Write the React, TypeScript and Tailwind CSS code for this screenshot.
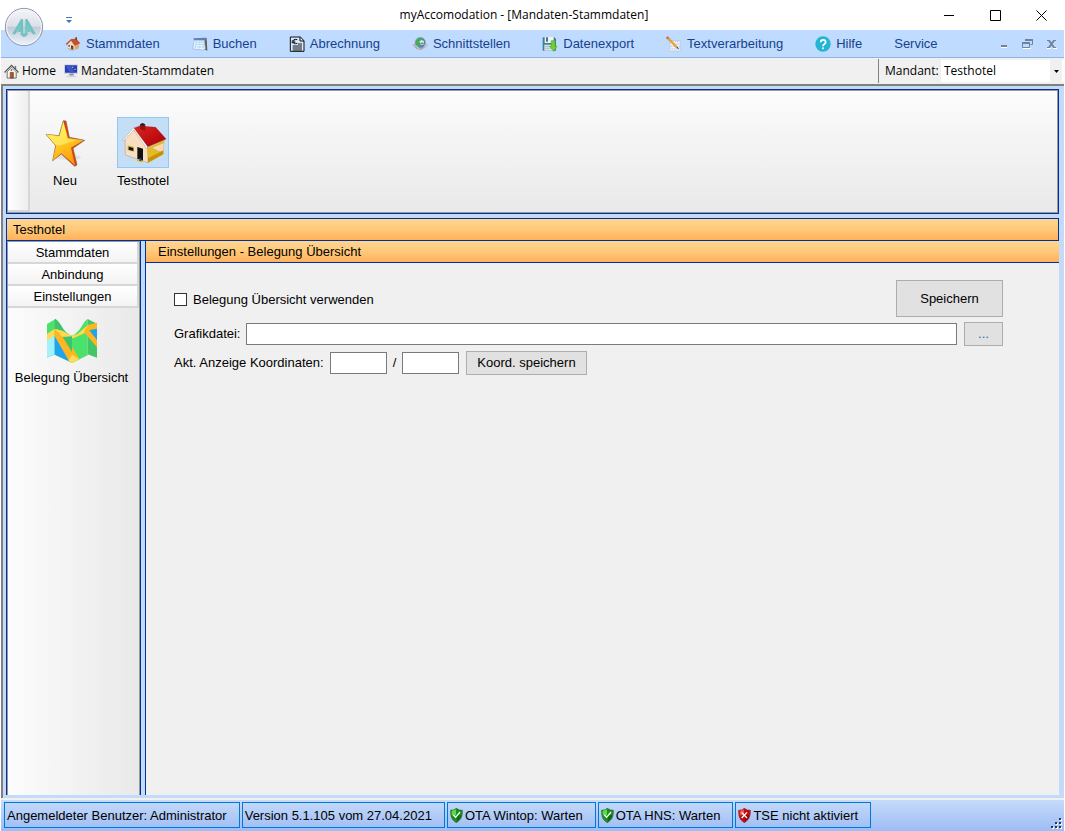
import React, { useState } from "react"

const sans = "font-['Liberation_Sans',Arial,sans-serif]"
const ui = "font-['Open_Sans','Noto_Sans',sans-serif]"

function LogoIcon() {
  return (
    <svg width="40" height="40" viewBox="0 0 120 120" aria-hidden="true">
      <defs>
        <linearGradient id="orb" x1="0" y1="0" x2="0" y2="1">
          <stop offset="0" stopColor="#f6f7fa" />
          <stop offset="0.48" stopColor="#dcdfe8" />
          <stop offset="0.5" stopColor="#c3c9d8" />
          <stop offset="1" stopColor="#eef2fa" />
        </linearGradient>
      </defs>
      <circle cx="60" cy="60" r="56" fill="url(#orb)" stroke="#8d99ad" strokeWidth="3" />
      <circle cx="60" cy="60" r="52" fill="none" stroke="#f4f6fb" strokeWidth="3" />
      <path d="M24 82 51 36H57V80H51V55L34 82Z" fill="#6fc4c2" />
      <path d="M96 82 70 36H64V80H70V55L78 69 86 82Z" fill="#6fc4c2" />
      <path d="M40 76 51 53V74ZM80 76 70 53V74Z" fill="#6fc4c2" />
      <path d="M48 79H73L68 86 60 91 53 86Z" fill="#6fc4c2" />
      <path d="M60 40v40" stroke="#8dcdd0" strokeWidth="2" />
    </svg>
  )
}

function SmallHouseIcon() {
  return (
    <svg width="16" height="16" viewBox="0 0 48 48" aria-hidden="true">
      <path d="M7 25 19 13 29 27v16L9 37Z" fill="#f2dcc2" />
      <path d="M29 27l13-5v15l-13 6Z" fill="#dcaa70" />
      <path d="M18 9 34 8l12 14-17 7L18 14 6 27l-4-3Z" fill="#c4512f" />
      <path d="M31 4h5v8h-5Z" fill="#8f3520" />
      <path d="M18 28l7 2v13l-7-2Z" fill="#6d3d25" />
      <path d="M10 27h5v5h-5Z" fill="#4b6a89" />
      <path d="M6 37l11 6h11l-8-5Z" fill="#a9a48b" />
    </svg>
  )
}

function CalendarIcon() {
  return (
    <svg width="16" height="16" viewBox="0 0 48 48" aria-hidden="true">
      <path d="M32 6h12l2 38-10-4Z" fill="#5d6052" />
      <path d="M4 7 42 5v9L6 13Z" fill="#5b7fae" />
      <path d="M6 13h31l3 26-8 3-30-3Z" fill="#e7f4ff" stroke="#91b5d6" strokeWidth="2" />
      <path d="M10 19h25M8 26h29M7 33h30M15 14l-5 24M24 14l-2 25M32 14l1 24" stroke="#acd3ef" strokeWidth="3" strokeDasharray="5 3" fill="none" />
    </svg>
  )
}

function InvoiceIcon() {
  return (
    <svg width="16" height="16" viewBox="0 0 48 48" aria-hidden="true">
      <path d="M4 3h30l11 11v32H4Z" fill="#d9eaff" stroke="#111" strokeWidth="3" />
      <path d="M33 3v12h12" fill="none" stroke="#111" strokeWidth="3" />
      <path d="M25 11c-10-3-13 1-13 6s5 8 13 5M8 15h11M8 20h11" fill="none" stroke="#111" strokeWidth="3" />
      <path d="M27 24h12M11 30h28M11 36h28M11 42h28" stroke="#111" strokeWidth="3" />
    </svg>
  )
}

function GlobeIcon() {
  return (
    <svg width="16" height="16" viewBox="0 0 48 48" aria-hidden="true">
      <path d="M1 28l12-7 34 5-11 11-11 6-12-4Z" fill="#a6abb5" />
      <circle cx="25" cy="20" r="16" fill="#5387ad" stroke="#9aa9ae" strokeWidth="2" />
      <path d="M12 20c-1-12 13-18 22-12l-6 8-8 2 3 15c-6-1-9-6-11-13Z" fill="#3fb052" />
      <path d="M22 17l6-5 8 3v10l-9 2Z" fill="#e1e8df" />
      <path d="M26 20h9v3h-9Z" fill="#356276" />
      <path d="M1 28l12 2 8 8-7 2M36 37l10-11-9 2" fill="none" stroke="#bfc2c9" strokeWidth="4" />
    </svg>
  )
}

function ExportIcon() {
  return (
    <svg width="16" height="16" viewBox="0 0 48 48" aria-hidden="true">
      <path d="M2 4h35l5 5v35H2Z" fill="#377fa7" />
      <path d="M8 3h27v18H8Z" fill="#eef3f3" />
      <path d="M12 4h6v13h-6Z" fill="#547180" />
      <path d="M7 26h26v18H7Z" fill="#d9e6e8" />
      <path d="M10 31h16M10 37h16" stroke="#8ba9b3" strokeWidth="2" />
      <path d="M28 14h11v17h6L35 46 23 31h5Z" fill="#73cf2f" stroke="#55ad25" strokeWidth="2" />
    </svg>
  )
}

function WritingIcon() {
  return (
    <svg width="16" height="16" viewBox="0 0 48 48" aria-hidden="true">
      <path d="M12 14h31l-2 22 6 9H6l6-9Z" fill="#edf5ff" stroke="#b1c3db" strokeWidth="2" />
      <path d="M14 31h13M12 39h30M27 17h12M31 24h8" stroke="#9fa9bb" strokeWidth="2" strokeDasharray="4 2" />
      <path d="M1 6 6 2l29 30-4 4Z" fill="#f2a728" stroke="#bb741c" />
      <path d="M0 5 5 1l5 5-5 4Z" fill="#ce6c54" />
      <path d="M31 36l4-4 4 8Z" fill="#4f4437" />
    </svg>
  )
}

function HelpIcon() {
  return (
    <svg width="16" height="16" viewBox="0 0 48 48" aria-hidden="true">
      <circle cx="24" cy="24" r="23" fill="#24b5d5" />
      <path d="M17 19c0-10 15-10 15 0 0 5-8 5-8 12" fill="none" stroke="#fff" strokeWidth="5" />
      <circle cx="24" cy="37" r="3" fill="#fff" />
    </svg>
  )
}

function HomeIcon() {
  return (
    <svg width="15" height="15" viewBox="0 0 48 48" aria-hidden="true">
      <path d="M34 6h5v13h-5Z" fill="#777" />
      <path d="M10 25 24 10l15 15v20H10Z" fill="#f8f6ef" stroke="#666" strokeWidth="3" />
      <path d="M2 27 24 5l22 22" fill="none" stroke="#555" strokeWidth="5" />
      <path d="M5 27 24 8l19 19" fill="none" stroke="#eee" strokeWidth="2" />
      <path d="M20 27h10v18H20Z" fill="#a95a25" stroke="#66381f" strokeWidth="2" />
      <circle cx="24" cy="19" r="3" fill="#777" />
    </svg>
  )
}

function MonitorIcon() {
  return (
    <svg width="14" height="14" viewBox="0 0 42 42" aria-hidden="true">
      <path d="M1 2h40v27H1Z" fill="#b9bed0" />
      <path d="M3 4h36v22H3Z" fill="#263fb4" />
      <path d="M3 4h17l13 22H19Z" fill="#3d56c8" />
      <path d="M24 8h4v3h-4ZM31 14h4v3h-4Z" fill="#b5c8ff" />
      <path d="M16 29h13v6H16Z" fill="#8b91a1" />
      <path d="M8 35h27l4 5H6Z" fill="#d3d5dc" />
    </svg>
  )
}

function StarIcon() {
  return (
    <svg width="48" height="48" viewBox="123 117 144 144" aria-hidden="true">
      <defs>
        <linearGradient id="star" x1="0" y1="0" x2="0.5" y2="1">
          <stop offset="0" stopColor="#ffff45" />
          <stop offset="0.45" stopColor="#ffd52b" />
          <stop offset="1" stopColor="#ff9d08" />
        </linearGradient>
      </defs>
      <ellipse cx="205" cy="232" rx="38" ry="8" fill="#e2e2e2" />
      <path d="M190 122 198 123 208 172 254 181 219 205 231 255 224 259 184 222 158 242 167 197 138 163 177 167Z" fill="#e23b0e" stroke="#6f6a58" strokeWidth="2" />
      <path d="M190 124 204 174 251 181 213 203 225 256 184 220 158 242 168 197 138 163 178 168Z" fill="url(#star)" />
      <path d="M190 128 202 176 229 183C207 180 185 202 167 195L143 166 179 170Z" fill="#fff37a" opacity="0.6" />
    </svg>
  )
}

function HotelIcon() {
  return (
    <svg width="48" height="48" viewBox="357 117 144 144" aria-hidden="true">
      <defs>
        <linearGradient id="roof" x1="0" y1="0" x2="1" y2="1">
          <stop offset="0" stopColor="#e12320" />
          <stop offset="1" stopColor="#a80007" />
        </linearGradient>
      </defs>
      <path d="M375 177 402 148 444 202 444 248 376 225Z" fill="#f8dfc2" stroke="#88765f" />
      <path d="M441 204 493 180 490 223 444 248Z" fill="#e0bb2c" />
      <path d="M458 203 491 190 489 217 472 211Z" fill="#f8d8bb" />
      <path d="M444 235 490 211 490 223 444 248Z" fill="#c99008" />
      <path d="M401 145 419 138 467 142 498 177 442 201Z" fill="url(#roof)" stroke="#930d0e" />
      <path d="M420 134l8-3 8 3v18l-16-4Z" fill="#8f1414" />
      <path d="M419 133l9-4 8 4-8 5Z" fill="#222" />
      <path d="M368 180 401 143 443 200 440 206 402 150 371 183Z" fill="#fff" stroke="#746d69" />
      <path d="M383 196 402 201V215L383 211Z" fill="#d2b13e" />
      <path d="M386 200 400 204V213L386 209Z" fill="#161616" />
      <path d="M412 201 429 206V243L412 237Z" fill="#111" />
      <path d="M412 236 429 242 425 248 410 242Z" fill="#e4bd21" />
      <path d="M418 235h6v8h-6Z" fill="#2448ad" />
    </svg>
  )
}

function MapIcon() {
  return (
    <svg width="50" height="45" viewBox="141 321 150 135" aria-hidden="true">
      <path d="M141 339 167 324V430L141 440Z" fill="#4be26b" />
      <path d="M167 324 C185 335 187 364 216 374V456L164 430V324Z" fill="#41c36b" />
      <path d="M216 374C244 362 247 333 263 324V433L216 456Z" fill="#4be26b" />
      <path d="M263 324 291 338V440L263 430Z" fill="#43c568" />
      <path d="M141 384 164 372V430L141 440Z" fill="#a3f0ff" />
      <path d="M164 370 210 452 164 431Z" fill="#20a4ef" />
      <path d="M141 369 164 353V374L141 387Z" fill="#ffda56" />
      <path d="M164 354 188 360 238 444 216 456 207 450 164 375Z" fill="#ffb61f" />
      <path d="M216 431 237 444 216 456 205 449Z" fill="#ffdb56" />
      <path d="M164 354C188 356 203 370 216 374L233 369 263 342V362L220 382 187 377Z" fill="#ffda50" />
      <path d="M263 342 291 335V353L268 358 291 386V409L252 363Z" fill="#ffb61f" />
      <path d="M268 358 291 353V386Z" fill="#20a4ef" />
      <path d="M188 378 216 376V424Z" fill="#41c36b" />
    </svg>
  )
}

function ShieldIcon({ ok }: { ok: boolean }) {
  return (
    <svg width="13" height="15" viewBox="0 0 39 45" aria-hidden="true">
      <path d="M2 7 11 6 19 1 28 6 37 7C37 24 35 34 19 44 3 34 2 24 2 7Z" fill={ok ? "#16951b" : "#c60c12"} stroke={ok ? "#2d5330" : "#7e2525"} strokeWidth="2" />
      <path d="M5 9 18 4V22H5Z" fill={ok ? "#57dc4f" : "#f3524d"} />
      <path d="M20 22h14c-2 10-6 14-14 19Z" fill={ok ? "#086e11" : "#990006"} />
      {ok
        ? <path d="M10 21 17 28 30 12" fill="none" stroke="#fff" strokeWidth="4" />
        : <path d="M11 13 27 30M27 13 11 30" fill="none" stroke="#fff" strokeWidth="4" />}
    </svg>
  )
}

const menuItems = [
  { label: "Stammdaten", icon: <SmallHouseIcon /> },
  { label: "Buchen", icon: <CalendarIcon /> },
  { label: "Abrechnung", icon: <InvoiceIcon /> },
  { label: "Schnittstellen", icon: <GlobeIcon /> },
  { label: "Datenexport", icon: <ExportIcon /> },
  { label: "Textverarbeitung", icon: <WritingIcon /> },
  { label: "Hilfe", icon: <HelpIcon /> },
  { label: "Service", icon: null },
]

const statusItems = [
  { label: "Angemeldeter Benutzer: Administrator", icon: null },
  { label: "Version 5.1.105 vom 27.04.2021", icon: null },
  { label: "OTA Wintop: Warten", icon: <ShieldIcon ok={true} /> },
  { label: "OTA HNS: Warten", icon: <ShieldIcon ok={true} /> },
  { label: "TSE nicht aktiviert", icon: <ShieldIcon ok={false} /> },
]

function TitleBar() {
  return (
    <header className={`relative flex h-[30px] items-center bg-white ${ui}`}>
      <div className="absolute left-[3px] top-[7px] z-10"><LogoIcon /></div>
      <button aria-label="Symbolleiste anpassen" className="ml-[62px] flex h-5 w-3 items-end justify-center pb-px">
        <svg width="6" height="7" viewBox="0 0 6 7"><path d="M0 0h6v1H0ZM0 3h6L3 6Z" fill="#4a74ae" /></svg>
      </button>
      <h1 className="flex-1 pl-[46px] text-center text-[12px] text-black">myAccomodation - [Mandaten-Stammdaten]</h1>
      <div className="flex">
        <button aria-label="Minimieren" className="flex h-[30px] w-[45px] items-center justify-center">
          <svg width="11" height="11"><path d="M0 5.5h10" stroke="#000" /></svg>
        </button>
        <button aria-label="Maximieren" className="flex h-[30px] w-[46px] items-center justify-center">
          <svg width="11" height="11"><path d="M.5 .5h10v10H.5Z" fill="none" stroke="#000" /></svg>
        </button>
        <button aria-label="Schließen" className="flex h-[30px] w-[46px] items-center justify-center">
          <svg width="11" height="11"><path d="M.5 .5l10 10M10.5 .5l-10 10" stroke="#000" /></svg>
        </button>
      </div>
    </header>
  )
}

function MenuBar() {
  return (
    <nav className="flex h-7 items-center border-b border-[#8db2e3] bg-[#bfdbff] pl-16 text-[13px] text-[#15428b]">
      <div className="flex flex-1 gap-8 pt-px">
        {menuItems.map((item) => (
          <button key={item.label} className="flex items-center gap-[5px] whitespace-nowrap">
            {item.icon}
            {item.label}
          </button>
        ))}
      </div>
      <div className="flex gap-3 pr-1.5">
        <button aria-label="Fenster minimieren" className="h-3 w-3">
          <svg width="12" height="12"><path d="M3 7h6v2H3Z" fill="#71849f" /><path d="M3 9h6v1H3Z" fill="#fff" /></svg>
        </button>
        <button aria-label="Fenster wiederherstellen" className="h-3 w-3">
          <svg width="12" height="12">
            <path d="M3.500 1.500h7v5h-2M.5 4.500h7v5h-7Z" fill="none" stroke="#6f829f" />
            <path d="M3 1h8v2H3ZM0 4h8v2H0Z" fill="#6f829f" />
            <path d="M1 10.500h8" fill="none" stroke="#fff" />
          </svg>
        </button>
        <button aria-label="Fenster schließen" className="h-3 w-3">
          <svg width="12" height="12">
            <path d="M1 10.500h4M7 10.500h4" stroke="#fff" />
            <path d="M1 2.500h3M7 2.500h3M1 9.500h3M7 9.500h3" stroke="#71849f" />
            <path d="M3 2.500 8 9.500M8 2.500 3 9.500" fill="none" stroke="#71849f" strokeWidth="2" />
          </svg>
        </button>
      </div>
    </nav>
  )
}

function Toolbar() {
  return (
    <div className={`flex h-[26px] items-center bg-[#f0f0f0] pl-[3px] text-[12px] text-black ${ui}`}>
      <a href="#home" className="flex items-center gap-[3px]"><HomeIcon />Home</a>
      <a href="#mandaten" className="ml-2 flex items-center gap-[3px]"><MonitorIcon />Mandaten-Stammdaten</a>
      <div className="ml-auto flex h-6 items-center border-l border-[#808080] pl-1.5">
        <label htmlFor="mandant" className="w-14">Mandant:</label>
        <div className="relative flex h-[22px] w-[123px] items-center bg-white">
          <select id="mandant" className="h-full w-full appearance-none bg-white pl-[3px]">
            <option>Testhotel</option>
          </select>
          <span className="pointer-events-none absolute inset-y-0 right-0.5 flex w-3 items-center justify-center bg-[#f0f0f0]">
            <svg width="5" height="3"><path d="M0 0h5L2.500 3Z" fill="#000" /></svg>
          </span>
        </div>
      </div>
    </div>
  )
}

function Ribbon() {
  const [selected, setSelected] = useState("Testhotel")
  const hotels = [
    { name: "Neu", icon: <StarIcon /> },
    { name: "Testhotel", icon: <HotelIcon /> },
  ]

  return (
    <section className="border border-[#00309c] text-[13px] text-black">
      <div className="flex h-[123px] border border-[#9a9a9a] bg-linear-to-b from-[#fcfcfc] to-[#e9e9e9]">
        <div className="w-[22px] border-b-2 border-r-2 border-[#d7d7d7] bg-linear-to-r from-white to-[#eeeeee]" />
        <div className="flex gap-[26px] pl-[9px] pt-[26px]">
          {hotels.map((hotel) => (
            <button key={hotel.name} onClick={() => setSelected(hotel.name)} className="flex w-[52px] flex-col items-center gap-1">
              <span className={`flex h-[51px] w-[52px] justify-center border pt-px ${selected === hotel.name ? "border-[#90c8f6] bg-[#c4def5]" : "border-transparent"}`}>
                {hotel.icon}
              </span>
              <span className="whitespace-nowrap leading-[18px]">{hotel.name}</span>
            </button>
          ))}
        </div>
      </div>
    </section>
  )
}

function Sidebar() {
  return (
    <aside className="flex w-[135px] shrink-0 border-x border-[#00309c] text-[13px] text-black">
      <div className="flex-1 border-x border-t border-[#9a9a9a] bg-linear-to-r from-[#fcfcfc] to-[#e9e9e9]">
        {["Stammdaten", "Anbindung", "Einstellungen"].map((name) => (
          <button key={name} className="block h-[22px] w-full border-b-2 border-r-2 border-[#d7d7d7] bg-linear-to-b from-white to-[#f3f3f3] pt-0.5 leading-[18px]">
            {name}
          </button>
        ))}
        <button className="flex w-full flex-col items-center gap-1 pr-1 pt-2.5">
          <MapIcon />
          <span className="whitespace-nowrap leading-[22px]">Belegung Übersicht</span>
        </button>
      </div>
    </aside>
  )
}

function SettingsForm() {
  const [enabled, setEnabled] = useState(false)
  const field = "border border-[#7a7a7a] bg-white px-1 outline-none"
  const button = "border border-[#adadad] bg-[#e1e1e1]"

  return (
    <form onSubmit={(e) => e.preventDefault()} className="flex flex-col gap-[5px] pl-7 pr-14 pt-[17px] text-[13px] text-black">
      <div className="flex items-center justify-between">
        <label className="flex items-center gap-1.5 pt-0.5">
          <input
            type="checkbox"
            checked={enabled}
            onChange={(e) => setEnabled(e.target.checked)}
            className="h-[13px] w-[13px] appearance-none border border-[#333333] bg-white checked:bg-[#333333]"
          />
          Belegung Übersicht verwenden
        </label>
        <button type="submit" className={`h-[37px] w-[107px] ${button}`}>Speichern</button>
      </div>
      <div className="flex items-center">
        <label htmlFor="grafik" className="w-[72px]">Grafikdatei:</label>
        <input id="grafik" type="text" className={`h-[22px] min-w-0 flex-1 ${field}`} />
        <button type="button" aria-label="Datei auswählen" className={`ml-[7px] h-6 w-[39px] text-[#2a6ab5] ${button}`}>...</button>
      </div>
      <div className="flex items-center">
        <label htmlFor="koord-x" className="w-[156px]">Akt. Anzeige Koordinaten:</label>
        <input id="koord-x" type="text" className={`h-[22px] w-[57px] ${field}`} />
        <label htmlFor="koord-y" className="w-[15px] text-center">/</label>
        <input id="koord-y" type="text" className={`h-[22px] w-[57px] ${field}`} />
        <button type="button" className={`ml-[7px] h-6 w-[121px] ${button}`}>Koord. speichern</button>
      </div>
    </form>
  )
}

function StatusBar() {
  return (
    <footer className="flex h-[31px] items-start gap-0.5 bg-linear-to-b from-[#c5dbfa] to-[#9ebcf5] pl-[3px] pt-0.5 text-[13px] text-black">
      {statusItems.map((item) => (
        <div key={item.label} className="flex h-[26px] items-center gap-0.5 whitespace-nowrap border border-[#0078d7] pl-0.5 pr-3 pt-px">
          {item.icon}
          {item.label}
        </div>
      ))}
      <svg className="ml-auto self-end" width="14" height="14" aria-hidden="true">
        <path d="M10 2h2v2h-2ZM6 6h2v2H6ZM10 6h2v2h-2ZM2 10h2v2H2ZM6 10h2v2H6ZM10 10h2v2h-2Z" fill="#fff" />
        <path d="M9 1h2v2H9ZM5 5h2v2H5ZM9 5h2v2H9ZM1 9h2v2H1ZM5 9h2v2H5ZM9 9h2v2H9Z" fill="#27395b" />
      </svg>
    </footer>
  )
}

export default function App() {
  const orange = "bg-linear-to-b from-[#ffd591] via-[#ffc978] to-[#ffb15c]"

  return (
    <div className={`flex min-h-screen flex-col bg-white px-px ${sans}`}>
      <TitleBar />
      <MenuBar />
      <Toolbar />
      <main className="flex flex-1 flex-col border-l-2 border-t-2 border-[#808080] bg-[#c3daf9] pb-[3px] pl-[3px] pr-[5px] pt-[3px]">
        <Ribbon />
        <h2 className={`mt-1 h-[23px] border border-[#00309c] pl-1.5 text-[13px] leading-[21px] text-black ${orange}`}>Testhotel</h2>
        <div className="flex flex-1 gap-1">
          <Sidebar />
          <section className="min-w-0 flex-1 border-l border-[#00309c] bg-[#f0f0f0]">
            <h3 className={`h-[22px] border-b border-[#00309c] pl-3 text-[13px] leading-[21px] text-black ${orange}`}>
              Einstellungen - Belegung Übersicht
            </h3>
            <SettingsForm />
          </section>
        </div>
      </main>
      <div className="h-0.5 bg-[#f0f0f0]" />
      <StatusBar />
    </div>
  )
}
